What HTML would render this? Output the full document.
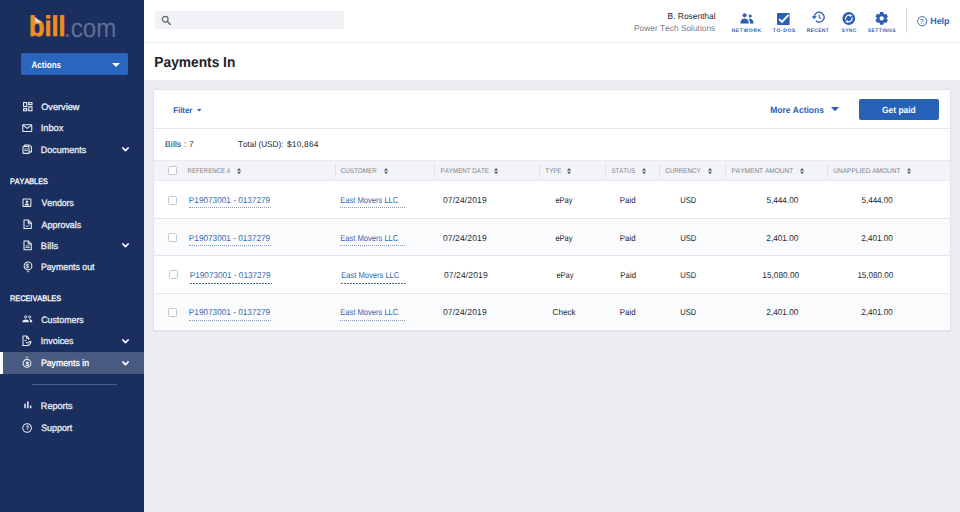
<!DOCTYPE html>
<html lang="en"><head><meta charset="utf-8"><title>Payments In</title>
<style>
*{box-sizing:border-box;margin:0;padding:0}
html,body{width:960px;height:512px;overflow:hidden;background:#ebedf0;font-family:"Liberation Sans",sans-serif;color:#1f2329}
#side{position:absolute;left:0;top:0;width:144px;height:512px;background:#1b2f5e}
#top{position:absolute;left:144px;top:0;width:816px;height:43px;background:#fff;border-bottom:1px solid #e9ebee}
#title{position:absolute;left:144px;top:43px;width:816px;height:37px;background:#fff}
#card{position:absolute;left:154px;top:90px;width:796px;height:240.6px;background:#fff;box-shadow:0 0 0 0.5px rgba(40,50,70,.10)}
.t{position:absolute;white-space:nowrap;font-kerning:none;text-rendering:geometricPrecision}
svg{position:absolute;overflow:visible}
.cb{position:absolute;width:9px;height:9px;border:1px solid #c2c6cd;border-radius:1.5px;background:#fff}
.ul{position:absolute;height:0;border-top:1px dotted #8c9bb5}
</style></head><body>
<div id="side">
<div class="t" id="logo" style="left:28px;top:9px;height:34px;line-height:34px"><span style="display:inline-block;position:absolute;left:0.6px;top:0.8px;transform-origin:0 50%;transform:scaleX(0.885);color:#f28c1e;font-weight:bold;font-size:28.6px;-webkit-text-stroke:0.6px #f28c1e">bill</span><span style="display:inline-block;position:absolute;left:36px;top:2.4px;transform-origin:0 50%;transform:scaleX(0.91);color:#5d709b;font-size:26.5px">.com</span></div>
<svg style="left:34px;top:16px" width="9" height="8" viewBox="0 0 9 8"><path d="M0.8 0.8 L0.8 6.6 L7.4 6.6 Z" fill="#f8dcb8"/></svg>
<div style="position:absolute;left:21px;top:53px;width:107px;height:21.6px;background:#2a65be;border-radius:2px"></div>
<div class="t" style="left:31.00px;top:59.00px;font-size:9.3px;line-height:12px;transform-origin:0 0;transform:translateX(0.55px) scaleX(0.8659);font-weight:bold;color:#fff;">Actions</div>
<svg style="left:111.5px;top:63px" width="8" height="4" viewBox="0 0 8 4"><path d="M0 0 L8 0 L4 4 Z" fill="#fff"/></svg>
<div style="position:absolute;left:0px;top:352px;width:144px;height:22px;background:#485a80;"></div>
<div style="position:absolute;left:0px;top:352px;width:3px;height:22px;background:#fff;"></div>
<div class="t" style="left:41.00px;top:101.00px;font-size:9.3px;line-height:12px;transform-origin:0 0;transform:translateX(0.17px) scaleX(0.9872);color:#e6eaf3;-webkit-text-stroke:0.32px #e6eaf3;">Overview</div>
<div class="t" style="left:40.00px;top:122.00px;font-size:9.3px;line-height:12px;transform-origin:0 0;transform:translateX(0.75px) scaleX(0.9912);color:#e6eaf3;-webkit-text-stroke:0.32px #e6eaf3;">Inbox</div>
<div class="t" style="left:40.00px;top:144.00px;font-size:9.3px;line-height:12px;transform-origin:0 0;transform:translateX(0.86px) scaleX(0.9655);color:#e6eaf3;-webkit-text-stroke:0.32px #e6eaf3;">Documents</div>
<div class="t" style="left:41.00px;top:197.00px;font-size:9.3px;line-height:12px;transform-origin:0 0;transform:translateX(0.56px) scaleX(0.9296);color:#e6eaf3;-webkit-text-stroke:0.32px #e6eaf3;">Vendors</div>
<div class="t" style="left:41.00px;top:219.00px;font-size:9.3px;line-height:12px;transform-origin:0 0;transform:translateX(0.58px) scaleX(0.9597);color:#e6eaf3;-webkit-text-stroke:0.32px #e6eaf3;">Approvals</div>
<div class="t" style="left:40.84px;top:240.00px;font-size:9.3px;line-height:12px;letter-spacing:0.099px;color:#e6eaf3;-webkit-text-stroke:0.32px #e6eaf3;">Bills</div>
<div class="t" style="left:40.00px;top:261.00px;font-size:9.3px;line-height:12px;transform-origin:0 0;transform:translateX(0.88px) scaleX(0.9432);color:#e6eaf3;-webkit-text-stroke:0.32px #e6eaf3;">Payments out</div>
<div class="t" style="left:41.00px;top:314.00px;font-size:9.3px;line-height:12px;transform-origin:0 0;transform:translateX(0.15px) scaleX(0.9479);color:#e6eaf3;-webkit-text-stroke:0.32px #e6eaf3;">Customers</div>
<div class="t" style="left:40.00px;top:335.00px;font-size:9.3px;line-height:12px;transform-origin:0 0;transform:translateX(0.78px) scaleX(0.9598);color:#e6eaf3;-webkit-text-stroke:0.32px #e6eaf3;">Invoices</div>
<div class="t" style="left:40.00px;top:357.00px;font-size:9.3px;line-height:12px;transform-origin:0 0;transform:translateX(0.88px) scaleX(0.9407);color:#fff;-webkit-text-stroke:0.32px #fff;">Payments in</div>
<div class="t" style="left:40.00px;top:400.00px;font-size:9.3px;line-height:12px;transform-origin:0 0;transform:translateX(0.86px) scaleX(0.9725);color:#e6eaf3;-webkit-text-stroke:0.32px #e6eaf3;">Reports</div>
<div class="t" style="left:41.00px;top:422.00px;font-size:9.3px;line-height:12px;transform-origin:0 0;transform:translateX(0.20px) scaleX(0.9538);color:#e6eaf3;-webkit-text-stroke:0.32px #e6eaf3;">Support</div>
<div class="t" style="left:9.00px;top:177.00px;font-size:8px;line-height:10px;transform-origin:0 0;transform:translateX(0.90px) scaleX(0.9074);color:#fff;-webkit-text-stroke:0.32px #fff;">PAYABLES</div>
<div class="t" style="left:9.00px;top:294.00px;font-size:8px;line-height:10px;transform-origin:0 0;transform:translateX(0.90px) scaleX(0.9211);color:#fff;-webkit-text-stroke:0.32px #fff;">RECEIVABLES</div>
<div style="position:absolute;left:32px;top:384px;width:85px;height:1px;background:#4d5f86;"></div>
<svg style="left:121.5px;top:147.0px" width="7" height="5" viewBox="0 0 7 5"><path d="M0.8 0.9 L3.5 3.6 L6.2 0.9" fill="none" stroke="#fff" stroke-width="1.5" stroke-linecap="round" stroke-linejoin="round"/></svg>
<svg style="left:121.5px;top:243.0px" width="7" height="5" viewBox="0 0 7 5"><path d="M0.8 0.9 L3.5 3.6 L6.2 0.9" fill="none" stroke="#fff" stroke-width="1.5" stroke-linecap="round" stroke-linejoin="round"/></svg>
<svg style="left:121.5px;top:338.5px" width="7" height="5" viewBox="0 0 7 5"><path d="M0.8 0.9 L3.5 3.6 L6.2 0.9" fill="none" stroke="#fff" stroke-width="1.5" stroke-linecap="round" stroke-linejoin="round"/></svg>
<svg style="left:121.5px;top:360.5px" width="7" height="5" viewBox="0 0 7 5"><path d="M0.8 0.9 L3.5 3.6 L6.2 0.9" fill="none" stroke="#fff" stroke-width="1.5" stroke-linecap="round" stroke-linejoin="round"/></svg>
<div class="t" style="left:25.00px;top:263.00px;font-size:6.4px;line-height:8px;transform-origin:0 0;transform:translateX(0.87px) scaleX(0.9160);font-weight:bold;color:#e6eaf3;">$</div>
<div class="t" style="left:25.00px;top:361.00px;font-size:6.4px;line-height:8px;transform-origin:0 0;transform:translateX(0.77px) scaleX(0.9160);font-weight:bold;color:#fff;">$</div>
<div class="t" style="left:25.00px;top:424.00px;font-size:6.6px;line-height:9px;transform-origin:0 0;transform:translateX(0.47px) scaleX(0.9258);font-weight:bold;color:#e6eaf3;">?</div>
<svg style="left:22.75px;top:101.9px" width="9.5" height="9.3" viewBox="0 0 9.5 9.3"><g fill="none" stroke="#e9edf5" stroke-width="1.1" stroke-linejoin="miter"><rect x="0.55" y="0.55" width="3.2" height="4"/><rect x="5.75" y="0.55" width="3.2" height="2.1"/><rect x="0.55" y="6.65" width="3.2" height="2.1"/><rect x="5.75" y="4.75" width="3.2" height="4"/></g></svg>
<svg style="left:22px;top:123.8px" width="10.5" height="8.4" viewBox="0 0 10.5 8.4"><g fill="none" stroke="#e9edf5" stroke-width="1.05" stroke-linejoin="round" stroke-linecap="round"><rect x="0.75" y="0.8" width="9" height="6.8" rx="0.5"/><path d="M1.2 1.4 L5.25 4.4 L9.3 1.4"/></g></svg>
<svg style="left:22px;top:144.3px" width="10.5" height="10.2" viewBox="0 0 10.5 10.2"><g fill="none" stroke="#e9edf5" stroke-width="1.05" stroke-linejoin="round" stroke-linecap="round"><path d="M2.6 2.2 V1 H7.6 L9.5 2.9 V8 H8.2"/><rect x="1" y="2.4" width="6" height="7" rx="0.5"/><path d="M2.6 5 H5.4 M2.6 6.6 H5.4" stroke-width="0.8"/><path d="M7.4 7.2 l1 0.9 l-1 0.9" stroke-width="0.8"/></g></svg>
<svg style="left:22.4px;top:198px" width="10" height="9.6" viewBox="0 0 10 9.6"><g fill="none" stroke="#e9edf5" stroke-width="1.05" stroke-linejoin="round" stroke-linecap="round"><rect x="1" y="1" width="7.9" height="7.6" rx="0.5"/></g><circle cx="4.95" cy="3.7" r="1.25" fill="#e9edf5"/><path d="M2.6 7.4 C2.6 5.8 3.8 5.5 4.95 5.5 C6.1 5.5 7.3 5.8 7.3 7.4 Z" fill="#e9edf5"/></svg>
<svg style="left:22.7px;top:219px" width="9.4" height="10.5" viewBox="0 0 9.4 10.5"><g fill="none" stroke="#e9edf5" stroke-width="1.05" stroke-linejoin="round" stroke-linecap="round"><path d="M1 1 H5.4 L8.3 3.9 V9.5 H1 Z"/><path d="M5.2 1.2 V4.1 H8.1"/><path d="M3 6.9 L4 7.9 L6 5.8" stroke-width="0.9"/></g></svg>
<svg style="left:22.7px;top:240.1px" width="9.4" height="10.8" viewBox="0 0 9.4 10.8"><g fill="none" stroke="#e9edf5" stroke-width="1.05" stroke-linejoin="round" stroke-linecap="round"><path d="M1 1 H5.4 L8.3 3.9 V9.8 H1 Z"/><path d="M5.2 1.2 V4.1 H8.1"/><path d="M2.8 6 H6.4 M2.8 7.6 H6.4" stroke-width="0.85"/></g></svg>
<svg style="left:22.5px;top:261px" width="10" height="12" viewBox="0 0 10 12"><g fill="none" stroke="#e9edf5" stroke-width="1.05" stroke-linejoin="round" stroke-linecap="round"><circle cx="5" cy="4.9" r="3.85"/><path d="M4 10.2 L5 11.2 L6 10.2" stroke-width="0.9"/></g></svg>
<svg style="left:22px;top:315.4px" width="10.5" height="7.8" viewBox="0 0 10.5 7.8"><circle cx="3.7" cy="1.9" r="1.2" fill="none" stroke="#e9edf5" stroke-width="0.9"/><circle cx="7.7" cy="1.9" r="1.05" fill="none" stroke="#e9edf5" stroke-width="0.9"/><path d="M0.3 7.3 C0.3 5.2 1.9 4.4 3.7 4.4 C5.5 4.4 7.1 5.2 7.1 7.3 Z" fill="#e9edf5"/><path d="M7.5 4.3 C9.2 4.2 10.3 5.1 10.3 7.3 H8 C8 5.9 7.9 5.1 7.1 4.5 Z" fill="#e9edf5"/></svg>
<svg style="left:22.4px;top:335.4px" width="10" height="11.6" viewBox="0 0 10 11.6"><g fill="none" stroke="#e9edf5" stroke-width="1.05" stroke-linejoin="round" stroke-linecap="round"><path d="M1 10.6 V1 H4.8 L6.8 3 V4.6"/><path d="M4.6 1.2 V3.2 H6.6"/><path d="M1 10.6 H4.4 C7 10.6 8.6 9 8.9 6.6 C7.9 6.2 6.9 7 6.4 7.7 H4"/><path d="M2.6 5.4 H4.6" stroke-width="0.8"/></g></svg>
<svg style="left:22.4px;top:356.2px" width="10" height="12" viewBox="0 0 10 12"><g fill="none" stroke="#e9edf5" stroke-width="1.05" stroke-linejoin="round" stroke-linecap="round"><circle cx="5" cy="7.3" r="3.95"/><path d="M4.1 0.9 L5 1.8 L5.9 0.9" stroke-width="0.9"/></g></svg>
<svg style="left:23.5px;top:401.2px" width="8" height="7.6" viewBox="0 0 8 7.6"><g fill="#e9edf5"><rect x="0.3" y="2.6" width="1.5" height="4.7" rx="0.3"/><rect x="3.1" y="0.3" width="1.5" height="7" rx="0.3"/><rect x="5.9" y="4.6" width="1.5" height="2.7" rx="0.3"/></g></svg>
<svg style="left:22.2px;top:422.8px" width="10.2" height="10.2" viewBox="0 0 10.2 10.2"><g fill="none" stroke="#e9edf5" stroke-width="1.05" stroke-linejoin="round" stroke-linecap="round"><circle cx="5.1" cy="5" r="4.3"/></g></svg>
</div>
<div id="top">
<div style="position:absolute;left:11px;top:11px;width:189px;height:18px;background:#f1f2f6;border-radius:2px"></div>
<svg style="left:17.19999999999999px;top:15px" width="11" height="11" viewBox="0 0 11 11"><circle cx="4.2" cy="4.2" r="2.9" fill="none" stroke="#5b6370" stroke-width="1.15"/><path d="M6.4 6.4 L9.4 9.4" stroke="#5b6370" stroke-width="1.35" stroke-linecap="round"/></svg>
<div class="t" style="left:523.00px;top:11.00px;font-size:8.6px;line-height:11px;transform-origin:0 0;transform:translateX(0.61px) scaleX(0.9737);color:#23272e;">B. Rosenthal</div>
<div class="t" style="left:490.00px;top:23.00px;font-size:8.6px;line-height:11px;transform-origin:0 0;transform:translateX(0.01px) scaleX(0.9717);color:#777d87;">Power Tech Solutions</div>
<div class="t" style="left:587.67px;top:28.00px;font-size:5.0px;line-height:6px;letter-spacing:0.592px;font-weight:bold;color:#2a5fb4;">NETWORK</div>
<div class="t" style="left:628.84px;top:28.00px;font-size:5.0px;line-height:6px;letter-spacing:0.582px;font-weight:bold;color:#2a5fb4;">TO-DOS</div>
<div class="t" style="left:662.67px;top:28.00px;font-size:5.0px;line-height:6px;letter-spacing:0.316px;font-weight:bold;color:#2a5fb4;">RECENT</div>
<div class="t" style="left:697.56px;top:28.00px;font-size:5.0px;line-height:6px;letter-spacing:0.313px;font-weight:bold;color:#2a5fb4;">SYNC</div>
<div class="t" style="left:723.86px;top:28.00px;font-size:5.0px;line-height:6px;letter-spacing:0.391px;font-weight:bold;color:#2a5fb4;">SETTINGS</div>
<div style="position:absolute;left:762px;top:8px;width:0;height:25px;border-left:1px solid #d6d9e0"></div>
<svg style="left:772.5px;top:15.6px" width="10.4" height="10.4" viewBox="0 0 10.4 10.4"><circle cx="5.2" cy="5.2" r="4.6" fill="none" stroke="#2a5fb4" stroke-width="0.9"/></svg>
<div class="t" style="left:775.00px;top:17.00px;font-size:7.4px;line-height:10px;transform-origin:0 0;transform:translateX(0.60px) scaleX(0.9894);color:#2a5fb4;">?</div>
<div class="t" style="left:786.00px;top:15.00px;font-size:9px;line-height:12px;transform-origin:0 0;transform:translateX(0.20px) scaleX(0.9929);font-weight:bold;color:#2a5fb4;">Help</div>
<svg style="left:595.6px;top:13.3px" width="14" height="11" viewBox="0 0 14 11"><g fill="#2a5fb4"><circle cx="4.6" cy="2.3" r="2"/><circle cx="10.2" cy="3" r="1.6"/><path d="M0.4 10.6 C0.4 7.2 2.2 5.6 4.6 5.6 C7 5.6 8.8 7.2 8.8 10.6 Z"/><path d="M9 5.8 C11.6 5.2 13.6 7 13.6 10.6 H10 C10 8.4 9.8 7 8.6 6.2 Z"/></g></svg>
<svg style="left:633px;top:12.8px" width="12.6" height="12" viewBox="0 0 12.6 12"><rect x="0" y="0" width="12.6" height="12" rx="0.8" fill="#2a5fb4"/><path d="M2.1 6.1 L5 9 L11.6 1.8" fill="none" stroke="#fff" stroke-width="1.9"/></svg>
<svg style="left:666.6px;top:11.4px" width="13.6" height="12.2" viewBox="0 0 13.6 12.2"><path d="M3.2 6.1 A5 5 0 1 1 4.8 9.8" fill="none" stroke="#2a5fb4" stroke-width="1.3"/><path d="M0.6 5.2 L5.8 5.2 L3.2 8.2 Z" fill="#2a5fb4"/><path d="M8.2 3.4 V6.4 L10.2 7.6" fill="none" stroke="#2a5fb4" stroke-width="1.1"/></svg>
<svg style="left:697.8px;top:12px" width="13.6" height="13" viewBox="0 0 13.6 13"><circle cx="6.8" cy="6.5" r="6.4" fill="#2a5fb4"/><g fill="none" stroke="#fff" stroke-width="1.2"><path d="M3.6 7.6 A3.4 3.4 0 0 1 8.6 3.7"/><path d="M10 5.4 A3.4 3.4 0 0 1 5 9.3"/></g><path d="M7.6 2 L10.4 3.2 L8 5.2 Z M6 11 L3.2 9.8 L5.6 7.8 Z" fill="#fff"/></svg>
<svg style="left:730.6px;top:12px" width="13.4" height="12.8" viewBox="0 0 13.4 12.8"><g fill="#2a5fb4"><rect x="4.80" y="0.10" width="3.8" height="3.6" rx="0.7" transform="rotate(0 6.7 6.4)"/><rect x="4.80" y="0.10" width="3.8" height="3.6" rx="0.7" transform="rotate(60 6.7 6.4)"/><rect x="4.80" y="0.10" width="3.8" height="3.6" rx="0.7" transform="rotate(120 6.7 6.4)"/><rect x="4.80" y="0.10" width="3.8" height="3.6" rx="0.7" transform="rotate(180 6.7 6.4)"/><rect x="4.80" y="0.10" width="3.8" height="3.6" rx="0.7" transform="rotate(240 6.7 6.4)"/><rect x="4.80" y="0.10" width="3.8" height="3.6" rx="0.7" transform="rotate(300 6.7 6.4)"/><path fill-rule="evenodd" d="M6.7 1.5 a4.9 4.9 0 1 0 0.001 0 Z M6.7 4.2 a2.2 2.2 0 1 1 -0.001 0 Z"/></g></svg>
</div>
<div id="title">
<div class="t" style="left:10.00px;top:11.00px;font-size:14.6px;line-height:19px;transform-origin:0 0;transform:translateX(0.33px) scaleX(0.9420);font-weight:bold;color:#1d2026;">Payments In</div>
</div>
<div id="card">
<div class="t" style="left:19.00px;top:15.00px;font-size:8.2px;line-height:11px;transform-origin:0 0;transform:translateX(0.23px) scaleX(0.9548);font-weight:bold;color:#2a5fb4;">Filter</div>
<svg style="left:42.5px;top:19px" width="4.6" height="2.6" viewBox="0 0 4.6 2.6"><path d="M0 0 L4.6 0 L2.3 2.6 Z" fill="#2a5fb4"/></svg>
<div class="t" style="left:616.00px;top:14.00px;font-size:9px;line-height:12px;transform-origin:0 0;transform:translateX(0.23px) scaleX(0.9405);font-weight:bold;color:#2a5fb4;">More Actions</div>
<svg style="left:676.8px;top:17.299999999999997px" width="8" height="4.2" viewBox="0 0 8 4.2"><path d="M0 0 L8 0 L4 4.2 Z" fill="#2a5fb4"/></svg>
<div style="position:absolute;left:705px;top:9px;width:80px;height:21.4px;background:#2861b8;border-radius:2px"></div>
<div class="t" style="left:727.00px;top:14.00px;font-size:9px;line-height:12px;transform-origin:0 0;transform:translateX(0.95px) scaleX(0.9389);font-weight:bold;color:#fff;">Get paid</div>
<div style="position:absolute;left:0px;top:38px;width:796px;height:1px;background:#e4e7eb;"></div>
<div class="t" style="left:11.06px;top:49.00px;font-size:8.4px;line-height:11px;letter-spacing:0.192px;color:#23272e;">Bills : 7</div>
<div class="t" style="left:84.00px;top:49.00px;font-size:8.4px;line-height:11px;transform-origin:0 0;transform:translateX(0.07px) scaleX(0.9734);color:#23272e;">Total (USD):</div>
<div class="t" style="left:132.91px;top:49.00px;font-size:8.4px;line-height:11px;letter-spacing:0.204px;color:#23272e;">$10,864</div>
<div style="position:absolute;left:0px;top:70px;width:796px;height:21px;background:#f3f4f7;border-top:1px solid #e8eaee;border-bottom:1px solid #e8eaee"></div>
<div class="t" style="left:33.00px;top:77.00px;font-size:6.9px;line-height:9px;transform-origin:0 0;transform:translateX(0.50px) scaleX(0.8856);color:#7b818b;">REFERENCE #</div>
<svg style="left:82.5px;top:78px" width="4.1" height="6.1" viewBox="0 0 3.8 5.6"><path d="M0 2.2 L1.9 0 L3.8 2.2Z M0 3.4 L1.9 5.6 L3.8 3.4Z" fill="#4a515e"/></svg>
<div class="t" style="left:186.00px;top:77.00px;font-size:6.9px;line-height:9px;transform-origin:0 0;transform:translateX(0.68px) scaleX(0.9147);color:#7b818b;">CUSTOMER</div>
<svg style="left:229.5px;top:78px" width="4.1" height="6.1" viewBox="0 0 3.8 5.6"><path d="M0 2.2 L1.9 0 L3.8 2.2Z M0 3.4 L1.9 5.6 L3.8 3.4Z" fill="#4a515e"/></svg>
<div class="t" style="left:286.00px;top:77.00px;font-size:6.9px;line-height:9px;transform-origin:0 0;transform:translateX(0.49px) scaleX(0.9042);color:#7b818b;">PAYMENT DATE</div>
<svg style="left:340px;top:78px" width="4.1" height="6.1" viewBox="0 0 3.8 5.6"><path d="M0 2.2 L1.9 0 L3.8 2.2Z M0 3.4 L1.9 5.6 L3.8 3.4Z" fill="#4a515e"/></svg>
<div class="t" style="left:391.00px;top:77.00px;font-size:6.9px;line-height:9px;transform-origin:0 0;transform:translateX(0.36px) scaleX(0.8964);color:#7b818b;">TYPE</div>
<svg style="left:412.5px;top:78px" width="4.1" height="6.1" viewBox="0 0 3.8 5.6"><path d="M0 2.2 L1.9 0 L3.8 2.2Z M0 3.4 L1.9 5.6 L3.8 3.4Z" fill="#4a515e"/></svg>
<div class="t" style="left:457.00px;top:77.00px;font-size:6.9px;line-height:9px;transform-origin:0 0;transform:translateX(0.48px) scaleX(0.8744);color:#7b818b;">STATUS</div>
<svg style="left:487.5px;top:78px" width="4.1" height="6.1" viewBox="0 0 3.8 5.6"><path d="M0 2.2 L1.9 0 L3.8 2.2Z M0 3.4 L1.9 5.6 L3.8 3.4Z" fill="#4a515e"/></svg>
<div class="t" style="left:511.00px;top:77.00px;font-size:6.9px;line-height:9px;transform-origin:0 0;transform:translateX(0.18px) scaleX(0.9067);color:#7b818b;">CURRENCY</div>
<svg style="left:553.5px;top:78px" width="4.1" height="6.1" viewBox="0 0 3.8 5.6"><path d="M0 2.2 L1.9 0 L3.8 2.2Z M0 3.4 L1.9 5.6 L3.8 3.4Z" fill="#4a515e"/></svg>
<div class="t" style="left:577.00px;top:77.00px;font-size:6.9px;line-height:9px;transform-origin:0 0;transform:translateX(0.46px) scaleX(0.9504);color:#7b818b;">PAYMENT AMOUNT</div>
<svg style="left:646.2px;top:78px" width="4.1" height="6.1" viewBox="0 0 3.8 5.6"><path d="M0 2.2 L1.9 0 L3.8 2.2Z M0 3.4 L1.9 5.6 L3.8 3.4Z" fill="#4a515e"/></svg>
<div class="t" style="left:679.00px;top:77.00px;font-size:6.9px;line-height:9px;transform-origin:0 0;transform:translateX(0.24px) scaleX(0.9504);color:#7b818b;">UNAPPLIED AMOUNT</div>
<svg style="left:753px;top:78px" width="4.1" height="6.1" viewBox="0 0 3.8 5.6"><path d="M0 2.2 L1.9 0 L3.8 2.2Z M0 3.4 L1.9 5.6 L3.8 3.4Z" fill="#4a515e"/></svg>
<div style="position:absolute;left:180.5px;top:74px;width:1px;height:13px;background:#e0e3e8;"></div>
<div style="position:absolute;left:280.0px;top:74px;width:1px;height:13px;background:#e0e3e8;"></div>
<div style="position:absolute;left:385.0px;top:74px;width:1px;height:13px;background:#e0e3e8;"></div>
<div style="position:absolute;left:450.5px;top:74px;width:1px;height:13px;background:#e0e3e8;"></div>
<div style="position:absolute;left:504.5px;top:74px;width:1px;height:13px;background:#e0e3e8;"></div>
<div style="position:absolute;left:571.0px;top:74px;width:1px;height:13px;background:#e0e3e8;"></div>
<div style="position:absolute;left:673.0px;top:74px;width:1px;height:13px;background:#e0e3e8;"></div>
<div class="cb" style="left:13.5px;top:76.19999999999999px"></div>
<div style="position:absolute;left:0px;top:91px;width:796px;height:37px;background:#fff;"></div>
<div class="cb" style="left:13.5px;top:105.75px"></div>
<div class="t" style="left:34.00px;top:105.00px;font-size:8.5px;line-height:11px;transform-origin:0 0;transform:translateX(0.83px) scaleX(0.9665);color:#2f66ad;">P19073001 - 0137279</div>
<div class="ul" style="left:35px;top:117px;width:82px;"></div>
<div class="t" style="left:186.00px;top:105.00px;font-size:8.5px;line-height:11px;transform-origin:0 0;transform:translateX(0.13px) scaleX(0.8922);color:#2f66ad;">East Movers LLC</div>
<div class="ul" style="left:186px;top:117px;width:64.5px;"></div>
<div class="t" style="left:288.92px;top:105.00px;font-size:8.5px;line-height:11px;letter-spacing:0.133px;color:#23272e;">07/24/2019</div>
<div class="t" style="left:401.00px;top:105.00px;font-size:8.5px;line-height:11px;transform-origin:0 0;transform:translateX(0.43px) scaleX(0.8817);color:#23272e;">ePay</div>
<div class="t" style="left:465.00px;top:105.00px;font-size:8.5px;line-height:11px;transform-origin:0 0;transform:translateX(0.86px) scaleX(0.9196);color:#23272e;">Paid</div>
<div class="t" style="left:526.00px;top:105.00px;font-size:8.5px;line-height:11px;transform-origin:0 0;transform:translateX(0.16px) scaleX(0.9032);color:#23272e;">USD</div>
<div class="t" style="left:612.00px;top:105.00px;font-size:8.5px;line-height:11px;transform-origin:0 0;transform:translateX(0.42px) scaleX(0.9641);color:#23272e;">5,444.00</div>
<div class="t" style="left:707.00px;top:105.00px;font-size:8.5px;line-height:11px;transform-origin:0 0;transform:translateX(0.43px) scaleX(0.9486);color:#23272e;">5,444.00</div>
<div style="position:absolute;left:0px;top:128px;width:796px;height:38px;background:#fafbfd;"></div>
<div class="cb" style="left:13.5px;top:143.0px"></div>
<div class="t" style="left:34.00px;top:143.00px;font-size:8.5px;line-height:11px;transform-origin:0 0;transform:translateX(0.83px) scaleX(0.9665);color:#2f66ad;">P19073001 - 0137279</div>
<div class="ul" style="left:35px;top:155px;width:82px;"></div>
<div class="t" style="left:186.00px;top:143.00px;font-size:8.5px;line-height:11px;transform-origin:0 0;transform:translateX(0.13px) scaleX(0.8922);color:#2f66ad;">East Movers LLC</div>
<div class="ul" style="left:186px;top:155px;width:64.5px;"></div>
<div class="t" style="left:288.92px;top:143.00px;font-size:8.5px;line-height:11px;letter-spacing:0.133px;color:#23272e;">07/24/2019</div>
<div class="t" style="left:401.00px;top:143.00px;font-size:8.5px;line-height:11px;transform-origin:0 0;transform:translateX(0.43px) scaleX(0.8817);color:#23272e;">ePay</div>
<div class="t" style="left:465.00px;top:143.00px;font-size:8.5px;line-height:11px;transform-origin:0 0;transform:translateX(0.86px) scaleX(0.9196);color:#23272e;">Paid</div>
<div class="t" style="left:526.00px;top:143.00px;font-size:8.5px;line-height:11px;transform-origin:0 0;transform:translateX(0.16px) scaleX(0.9032);color:#23272e;">USD</div>
<div class="t" style="left:612.00px;top:143.00px;font-size:8.5px;line-height:11px;transform-origin:0 0;transform:translateX(0.34px) scaleX(0.9667);color:#23272e;">2,401.00</div>
<div class="t" style="left:707.00px;top:143.00px;font-size:8.5px;line-height:11px;transform-origin:0 0;transform:translateX(0.34px) scaleX(0.9512);color:#23272e;">2,401.00</div>
<div style="position:absolute;left:0px;top:166px;width:796px;height:37px;background:#fff;"></div>
<div class="cb" style="left:14.5px;top:180.25px"></div>
<div class="t" style="left:35.00px;top:180.00px;font-size:8.5px;line-height:11px;transform-origin:0 0;transform:translateX(0.83px) scaleX(0.9605);color:#2f66ad;">P19073001 - 0137279</div>
<div class="ul" style="left:36px;top:193px;width:82px;border-top:none;height:1px;background:repeating-linear-gradient(90deg,#4a669c 0,#4a669c 2px,transparent 2px,transparent 3px)"></div>
<div class="t" style="left:187.00px;top:180.00px;font-size:8.5px;line-height:11px;transform-origin:0 0;transform:translateX(0.13px) scaleX(0.8922);color:#2f66ad;">East Movers LLC</div>
<div class="ul" style="left:187px;top:193px;width:64.5px;border-top:none;height:1px;background:repeating-linear-gradient(90deg,#4a669c 0,#4a669c 2px,transparent 2px,transparent 3px)"></div>
<div class="t" style="left:289.92px;top:180.00px;font-size:8.5px;line-height:11px;letter-spacing:0.133px;color:#23272e;">07/24/2019</div>
<div class="t" style="left:402.00px;top:180.00px;font-size:8.5px;line-height:11px;transform-origin:0 0;transform:translateX(0.43px) scaleX(0.8817);color:#23272e;">ePay</div>
<div class="t" style="left:466.00px;top:180.00px;font-size:8.5px;line-height:11px;transform-origin:0 0;transform:translateX(0.36px) scaleX(0.9196);color:#23272e;">Paid</div>
<div class="t" style="left:526.00px;top:180.00px;font-size:8.5px;line-height:11px;transform-origin:0 0;transform:translateX(0.16px) scaleX(0.9032);color:#23272e;">USD</div>
<div class="t" style="left:608.00px;top:180.00px;font-size:8.5px;line-height:11px;transform-origin:0 0;transform:translateX(0.37px) scaleX(0.9706);color:#23272e;">15,080.00</div>
<div class="t" style="left:703.00px;top:180.00px;font-size:8.5px;line-height:11px;transform-origin:0 0;transform:translateX(0.38px) scaleX(0.9502);color:#23272e;">15,080.00</div>
<div style="position:absolute;left:0px;top:203px;width:796px;height:37px;background:#fafbfd;"></div>
<div class="cb" style="left:13.5px;top:217.5px"></div>
<div class="t" style="left:34.00px;top:217.00px;font-size:8.5px;line-height:11px;transform-origin:0 0;transform:translateX(0.83px) scaleX(0.9665);color:#2f66ad;">P19073001 - 0137279</div>
<div class="ul" style="left:35px;top:229.5px;width:82px;"></div>
<div class="t" style="left:186.00px;top:217.00px;font-size:8.5px;line-height:11px;transform-origin:0 0;transform:translateX(0.13px) scaleX(0.8922);color:#2f66ad;">East Movers LLC</div>
<div class="ul" style="left:186px;top:229.5px;width:64.5px;"></div>
<div class="t" style="left:288.92px;top:217.00px;font-size:8.5px;line-height:11px;letter-spacing:0.133px;color:#23272e;">07/24/2019</div>
<div class="t" style="left:398.00px;top:217.00px;font-size:8.5px;line-height:11px;transform-origin:0 0;transform:translateX(0.59px) scaleX(0.9504);color:#23272e;">Check</div>
<div class="t" style="left:465.00px;top:217.00px;font-size:8.5px;line-height:11px;transform-origin:0 0;transform:translateX(0.86px) scaleX(0.9196);color:#23272e;">Paid</div>
<div class="t" style="left:526.00px;top:217.00px;font-size:8.5px;line-height:11px;transform-origin:0 0;transform:translateX(0.16px) scaleX(0.9032);color:#23272e;">USD</div>
<div class="t" style="left:612.00px;top:217.00px;font-size:8.5px;line-height:11px;transform-origin:0 0;transform:translateX(0.34px) scaleX(0.9667);color:#23272e;">2,401.00</div>
<div class="t" style="left:707.00px;top:217.00px;font-size:8.5px;line-height:11px;transform-origin:0 0;transform:translateX(0.34px) scaleX(0.9512);color:#23272e;">2,401.00</div>
<div style="position:absolute;left:0px;top:128px;width:796px;height:1px;background:#e3e6ea;"></div>
<div style="position:absolute;left:0px;top:165px;width:796px;height:1px;background:#e3e6ea;"></div>
<div style="position:absolute;left:0px;top:203px;width:796px;height:1px;background:#e3e6ea;"></div>
<div style="position:absolute;left:0px;top:240px;width:796px;height:1px;background:#e3e6ea;"></div>
</div>
</body></html>
